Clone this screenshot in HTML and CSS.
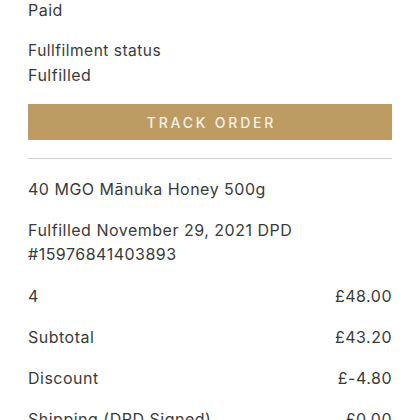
FILE: index.html
```html
<!DOCTYPE html>
<html>
<head>
<meta charset="utf-8">
<link rel="stylesheet" href="styles.css">
</head>
<body>
<main class="order">
  <p class="line first">Paid</p>
  <div class="status">
    <p class="label">Fullfilment status</p>
    <p class="line">Fulfilled</p>
  </div>
  <button class="track">TRACK ORDER</button>
  <hr class="divider">
  <p class="line">40 MGO Mānuka Honey 500g</p>
  <p class="line">Fulfilled November 29, 2021 DPD<br>#15976841403893</p>
  <div class="totals">
    <div class="row"><span>4</span><span>£48.00</span></div>
    <div class="row"><span>Subtotal</span><span>£43.20</span></div>
    <div class="row"><span>Discount</span><span>£-4.80</span></div>
    <div class="row"><span>Shipping (DPD Signed)</span><span>£0.00</span></div>
  </div>
</main>
</body>
</html>
```
FILE: styles.css
```css
html, body {
  margin: 0;
  padding: 0;
  background: #fff;
}
body {
  font-family: "Inter", "Open Sans", sans-serif;
  color: #3a3a3a;
  font-size: 16px;
  line-height: 24px;
  letter-spacing: 0.5px;
}
.order {
  display: flex;
  flex-direction: column;
  gap: 17px;
  padding: 0 28px;
  margin-top: -2px;
}
p {
  margin: 0;
}
.status {
  display: flex;
  flex-direction: column;
}
.label {
  font-size: 15.5px;
  line-height: 24px;
}
.track {
  display: block;
  width: 100%;
  height: 36px;
  border: 0;
  background: #bd9c64;
  color: #f7f1e6;
  font-family: inherit;
  font-size: 14px;
  font-weight: 500;
  letter-spacing: 2.8px;
  padding: 0 0 0 3px;
  margin: 0;
}
.divider {
  border: 0;
  border-top: 1px solid #cfcfcf;
  margin: 1px 0 1px;
  height: 0;
}
.totals {
  display: flex;
  flex-direction: column;
  gap: 17px;
  margin-top: 1px;
}
.row {
  display: flex;
  justify-content: space-between;
}
```
